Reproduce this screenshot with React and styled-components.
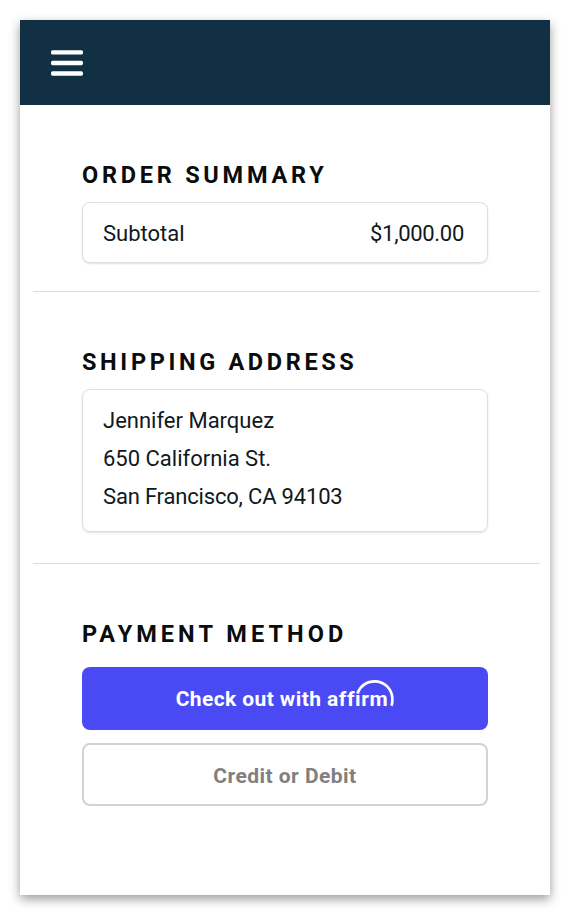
import React, { Fragment } from 'react';
import styled, { createGlobalStyle } from 'styled-components';

const address = [
    { text: 'Jennifer Marquez', spacing: 0 },
    { text: '650 California St.', spacing: 0 },
    { text: 'San Francisco, CA 94103', spacing: -0.18 },
];

const GlobalStyle = createGlobalStyle`
    * {
        box-sizing: border-box;
    }
    body {
        margin: 0;
        background: #fff;
        color: #101820;
        font-family: Roboto, 'Liberation Sans', sans-serif;
    }
`;

const Page = styled.main`
    width: 530px;
    height: 875px;
    margin: 20px;
    background: #fff;
    box-shadow: 0 4px 10px rgba(0, 0, 0, 0.4);
`;

const Header = styled.header`
    display: flex;
    align-items: center;
    height: 85px;
    padding-left: 31px;
    background: #123044;
`;

const MenuButton = styled.button`
    display: flex;
    padding: 0;
    border: 0;
    background: none;
`;

const Section = styled.section`
    height: ${props => props.$height}px;
    margin: 0 10px 0 13px;
    padding: 56px 52px 0 49px;
    border-bottom: ${props => (props.$last ? '0' : '1px solid #dcdcdc')};
`;

const Title = styled.h2`
    margin: 0 0 ${props => props.$gap || 12}px;
    color: #0a0c0d;
    font-size: 23.5px;
    font-weight: 700;
    line-height: 29px;
    letter-spacing: ${props => props.$spacing}px;
    white-space: nowrap;
`;

const Box = styled.div`
    width: 406px;
    height: ${props => props.$height}px;
    padding: ${props => props.$padding};
    border: 1px solid #dedede;
    border-radius: 8px;
    box-shadow: 0 1px 2px rgba(0, 0, 0, 0.13);
    font-size: 22px;
`;

const Row = styled.div`
    display: flex;
    justify-content: space-between;
    line-height: 37.7px;
`;

const Text = styled.span`
    letter-spacing: ${props => props.$spacing || 0}px;
`;

const PayButton = styled.button`
    display: flex;
    align-items: center;
    justify-content: center;
    width: 406px;
    height: 63px;
    margin: 0 0 13.5px;
    padding: ${props => (props.$primary ? '1px 0 0' : '3px 0 0')};
    border: ${props => (props.$primary ? '0' : '2px solid #d3d3d3')};
    border-radius: 8px;
    background: ${props => (props.$primary ? '#4a4af4' : '#fff')};
    color: ${props => (props.$primary ? '#fff' : '#808080')};
    font-family: inherit;
    font-size: 21px;
    font-weight: 700;
`;

const Logo = styled.svg`
    margin: 0 0 7px 6px;
    font-size: 21px;
    font-weight: 700;
    font-variant-ligatures: none;
    letter-spacing: 0.6px;
`;

const MenuIcon = () => (
    <svg width="32" height="28" viewBox="0 0 32 28" fill="#fff">
        <rect x="0" y="1.2" width="32" height="4.4" rx="1.6" />
        <rect x="0" y="11.8" width="32" height="4.4" rx="1.6" />
        <rect x="0" y="22.3" width="32" height="4.4" rx="1.6" />
    </svg>
);

// The arch of the logo takes the place of the dot on the i
const AffirmLogo = () => (
    <Logo width="67" height="32" viewBox="0 0 67 32">
        <clipPath id="dot">
            <path d="M0 0H29.6V14.2H36V0H67V32H0Z" />
        </clipPath>
        <text x="0" y="26.5" fill="#fff" clipPath="url(#dot)">
            affirm
        </text>
        <path
            d="M30.7 14C33.5 6.5 40 2.3 47.5 2.3C58 2.3 65.4 10.5 65.4 20.5C65.4 23 65.1 25 64.5 26.8"
            fill="none"
            stroke="#fff"
            strokeWidth="2.7"
        />
    </Logo>
);

const App = () => (
    <Fragment>
        <GlobalStyle />
        <Page>
            <Header>
                <MenuButton aria-label="Menu">
                    <MenuIcon />
                </MenuButton>
            </Header>
            <Section $height={187}>
                <Title $spacing={3.75}>ORDER SUMMARY</Title>
                <Box $height={61} $padding="12px 23px 0 20px">
                    <Row>
                        <Text>Subtotal</Text>
                        <Text $spacing={-0.3}>$1,000.00</Text>
                    </Row>
                </Box>
            </Section>
            <Section $height={272}>
                <Title $spacing={3.65}>SHIPPING ADDRESS</Title>
                <Box $height={143} $padding="12.4px 20px 0">
                    {address.map(line => (
                        <Row key={line.text}>
                            <Text $spacing={line.spacing}>{line.text}</Text>
                        </Row>
                    ))}
                </Box>
            </Section>
            <Section $height={300} $last>
                <Title $spacing={4.05} $gap={17.5}>
                    PAYMENT METHOD
                </Title>
                <PayButton $primary>
                    <Text $spacing={0.4}>Check out with</Text>
                    <AffirmLogo />
                </PayButton>
                <PayButton>
                    <Text $spacing={0.45}>Credit or Debit</Text>
                </PayButton>
            </Section>
        </Page>
    </Fragment>
);

export default App;
